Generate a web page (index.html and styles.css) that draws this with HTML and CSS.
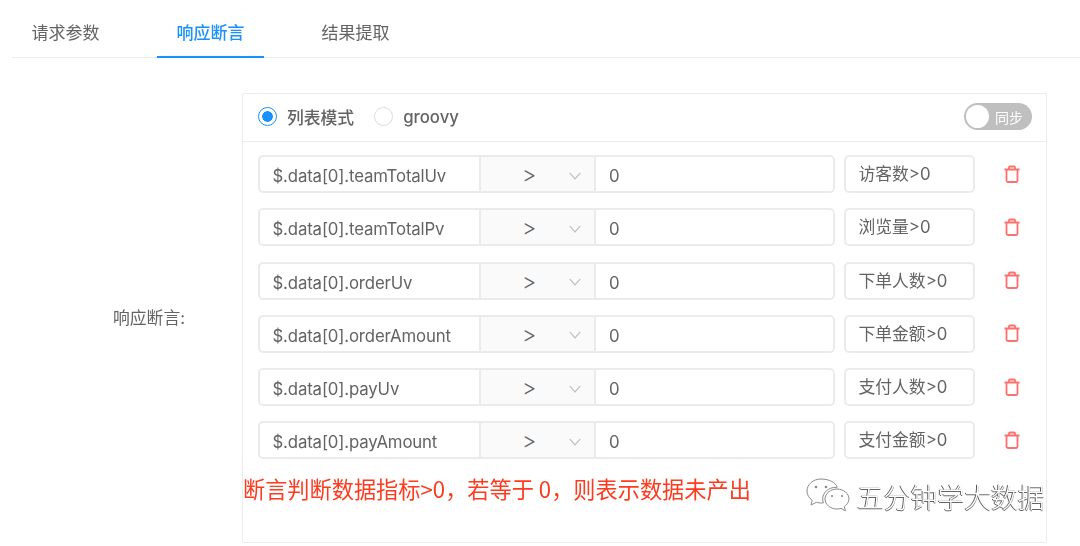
FILE: index.html
```html
<!DOCTYPE html>
<html lang="zh">
<head>
<meta charset="utf-8">
<title>响应断言</title>
<link rel="stylesheet" href="styles.css">
</head>
<body>
<svg class="defs" width="0" height="0" aria-hidden="true">
  <symbol id="trash" viewBox="0 0 18 18">
    <path d="M1.500 4.500h15M6 4.500V2.500q0-1 1-1h4q1 0 1 1v2M3.500 4.500v11q0 1.500 1.500 1.500h8q1.500 0 1.500-1.500v-11" fill="none" stroke="currentColor" stroke-width="1.800"/>
  </symbol>
  <symbol id="chev" viewBox="0 0 12 8">
    <path d="M.7.8 6 6.800 11.300.8" fill="none" stroke="currentColor" stroke-width="1.100"/>
  </symbol>
</svg>
<main class="page">
  <nav class="tabs">
    <a class="tab">请求参数</a>
    <a class="tab active">响应断言</a>
    <a class="tab">结果提取</a>
  </nav>
  <section class="form">
    <div class="label">响应断言:</div>
    <div class="card">
      <header class="card-head">
        <label class="radio on"><i></i>列表模式</label>
        <label class="radio"><i></i>groovy</label>
        <div class="switch"><b></b><span>同步</span></div>
      </header>
      <div class="rows">
        <div class="row">
          <div class="group"><span class="path">$.data[0].teamTotalUv</span><span class="op">&gt;<svg class="chev"><use href="#chev"/></svg></span><span class="val">0</span></div>
          <span class="name">访客数&gt;0</span>
          <svg class="del"><use href="#trash"/></svg>
        </div>
        <div class="row">
          <div class="group"><span class="path">$.data[0].teamTotalPv</span><span class="op">&gt;<svg class="chev"><use href="#chev"/></svg></span><span class="val">0</span></div>
          <span class="name">浏览量&gt;0</span>
          <svg class="del"><use href="#trash"/></svg>
        </div>
        <div class="row">
          <div class="group"><span class="path">$.data[0].orderUv</span><span class="op">&gt;<svg class="chev"><use href="#chev"/></svg></span><span class="val">0</span></div>
          <span class="name">下单人数&gt;0</span>
          <svg class="del"><use href="#trash"/></svg>
        </div>
        <div class="row">
          <div class="group"><span class="path">$.data[0].orderAmount</span><span class="op">&gt;<svg class="chev"><use href="#chev"/></svg></span><span class="val">0</span></div>
          <span class="name">下单金额&gt;0</span>
          <svg class="del"><use href="#trash"/></svg>
        </div>
        <div class="row">
          <div class="group"><span class="path">$.data[0].payUv</span><span class="op">&gt;<svg class="chev"><use href="#chev"/></svg></span><span class="val">0</span></div>
          <span class="name">支付人数&gt;0</span>
          <svg class="del"><use href="#trash"/></svg>
        </div>
        <div class="row">
          <div class="group"><span class="path">$.data[0].payAmount</span><span class="op">&gt;<svg class="chev"><use href="#chev"/></svg></span><span class="val">0</span></div>
          <span class="name">支付金额&gt;0</span>
          <svg class="del"><use href="#trash"/></svg>
        </div>
      </div>
      <p class="note">断言判断数据指标&gt;0，若等于 0，则表示数据未产出</p>
      <div class="mark">
        <svg class="wechat" viewBox="0 0 44 38" fill="#fff" stroke="#8a8a8a" stroke-width="1">
          <path d="M15 1C7 1 1 6.500 1 13c0 3.800 2 7 5.200 9.300L5 27l5.400-2.700c1.700.5 3.200.7 5 .7l2-.1c-.5-1.300-.7-2.700-.7-4 0-6.500 6-11.600 13.300-11.600h1.200C29.800 4.500 23 1 15 1Z"/>
          <path d="M43 21c0-5.500-5.500-10-12-10s-12 4.500-12 10 5.500 10 12 10c1.400 0 2.800-.2 4-.6l4.500 2.400-1.200-4C41 26.500 43 24 43 21Z"/>
          <g fill="#8a8a8a" stroke="none"><circle cx="10" cy="9" r="1.300"/><circle cx="20" cy="9" r="1.300"/><circle cx="26" cy="18" r="1.100"/><circle cx="36" cy="18" r="1.100"/></g>
        </svg>
        <span class="mark-text">五分钟学大数据</span>
      </div>
    </div>
  </section>
</main>
</body>
</html>
```
FILE: styles.css
```css
* { box-sizing: border-box; }
html, body { margin: 0; height: 100%; background: #fff; overflow: hidden; }
body {
  font-family: "Inter", "Noto Sans CJK SC", sans-serif;
  font-size: 16.800px;
  color: #636363;
}
.defs { position: absolute; }
.page { display: flex; flex-direction: column; height: 546px; padding: 0 0 3px 12px; filter: blur(.3px); }

.tabs { display: flex; height: 58px; border-bottom: 1px solid #ebebeb; }
.tab {
  height: 58px;
  width: 107px;
  margin-right: 38px;
  padding-top: 21px;
  line-height: 25px;
  text-align: center;
  font-size: 17px;
}
.tab.active { color: #1890ff; border-bottom: 2px solid #1890ff; font-weight: 500; }

.form { flex: 1; display: flex; padding-top: 35px; min-height: 0; }
.label { width: 230px; padding-right: 57px; align-self: center; text-align: right; line-height: 24px; margin-bottom: 1px; }
.card {
  position: relative;
  width: 805px;
  border: 1px solid #ebebeb;
  border-radius: 2px;
  display: flex;
  flex-direction: column;
}
.card-head {
  height: 48px;
  flex: none;
  display: flex;
  align-items: center;
  padding: 0 14px 2px 15px;
  border-bottom: 1px solid #ebebeb;
}
.radio { display: flex; align-items: center; margin-right: 20px; font-weight: 500; }
.radio i {
  width: 19px;
  height: 19px;
  margin-right: 10px;
  border: 1.500px solid #dcdcdc;
  border-radius: 50%;
  background: #fff;
}
.radio.on i { border-color: #1890ff; background: radial-gradient(circle, #1890ff 0 5px, #fff 5.600px); }
.switch {
  margin-left: auto;
  width: 68px;
  height: 27px;
  border-radius: 14px;
  background: #bfbfbf;
  display: flex;
  align-items: center;
  padding: 0 2px;
  color: #fff;
  font-size: 14px;
}
.switch b { width: 23px; height: 23px; border-radius: 50%; background: #fff; margin-right: 6px; }

.rows { display: flex; flex-direction: column; gap: 15.300px; padding: 13px 15px 0; }
.row { display: flex; align-items: center; height: 38px; }
.group {
  display: flex;
  width: 577px;
  height: 38px;
  border: 2px solid #ebebeb;
  border-radius: 5px;
}
.path { width: 221px; padding-left: 12.500px; line-height: 39px; letter-spacing: -.15px; border-right: 2px solid #ebebeb; }
.op {
  position: relative;
  width: 115px;
  background: #fafafa;
  border-right: 2px solid #ebebeb;
  line-height: 34px;
  padding-left: 41px;
  font-size: 22px;
  font-weight: 300;
}
.chev { position: absolute; right: 13px; top: 14.500px; width: 12px; height: 8px; color: #bdbdbd; }
.val { padding-left: 13px; line-height: 39px; }
.name {
  width: 131px;
  height: 38px;
  margin-left: 9px;
  padding-left: 12.500px;
  line-height: 35px;
  border: 2px solid #ebebeb;
  border-radius: 5px;
}
.del { width: 18px; height: 18px; margin-left: 28px; margin-top: -1px; color: #ff6f6b; }

.note {
  margin: 0;
  position: absolute;
  left: 0;
  top: 379px;
  color: #ff3a1e;
  font-family: "Noto Sans CJK SC", sans-serif;
  font-size: 22.200px;
  line-height: 30px;
  white-space: nowrap;
}
.mark { position: absolute; left: 563px; top: 384px; display: flex; align-items: center; gap: 7px; white-space: nowrap; }
.wechat { width: 44px; height: 38px; flex: none; }
.mark-text {
  font-family: "Noto Sans CJK SC", sans-serif;
  font-size: 26.800px;
  font-weight: 300;
  line-height: 38px;
  color: #fff;
  text-shadow: -1px 0 #555, 0 1px #666;
}
```
